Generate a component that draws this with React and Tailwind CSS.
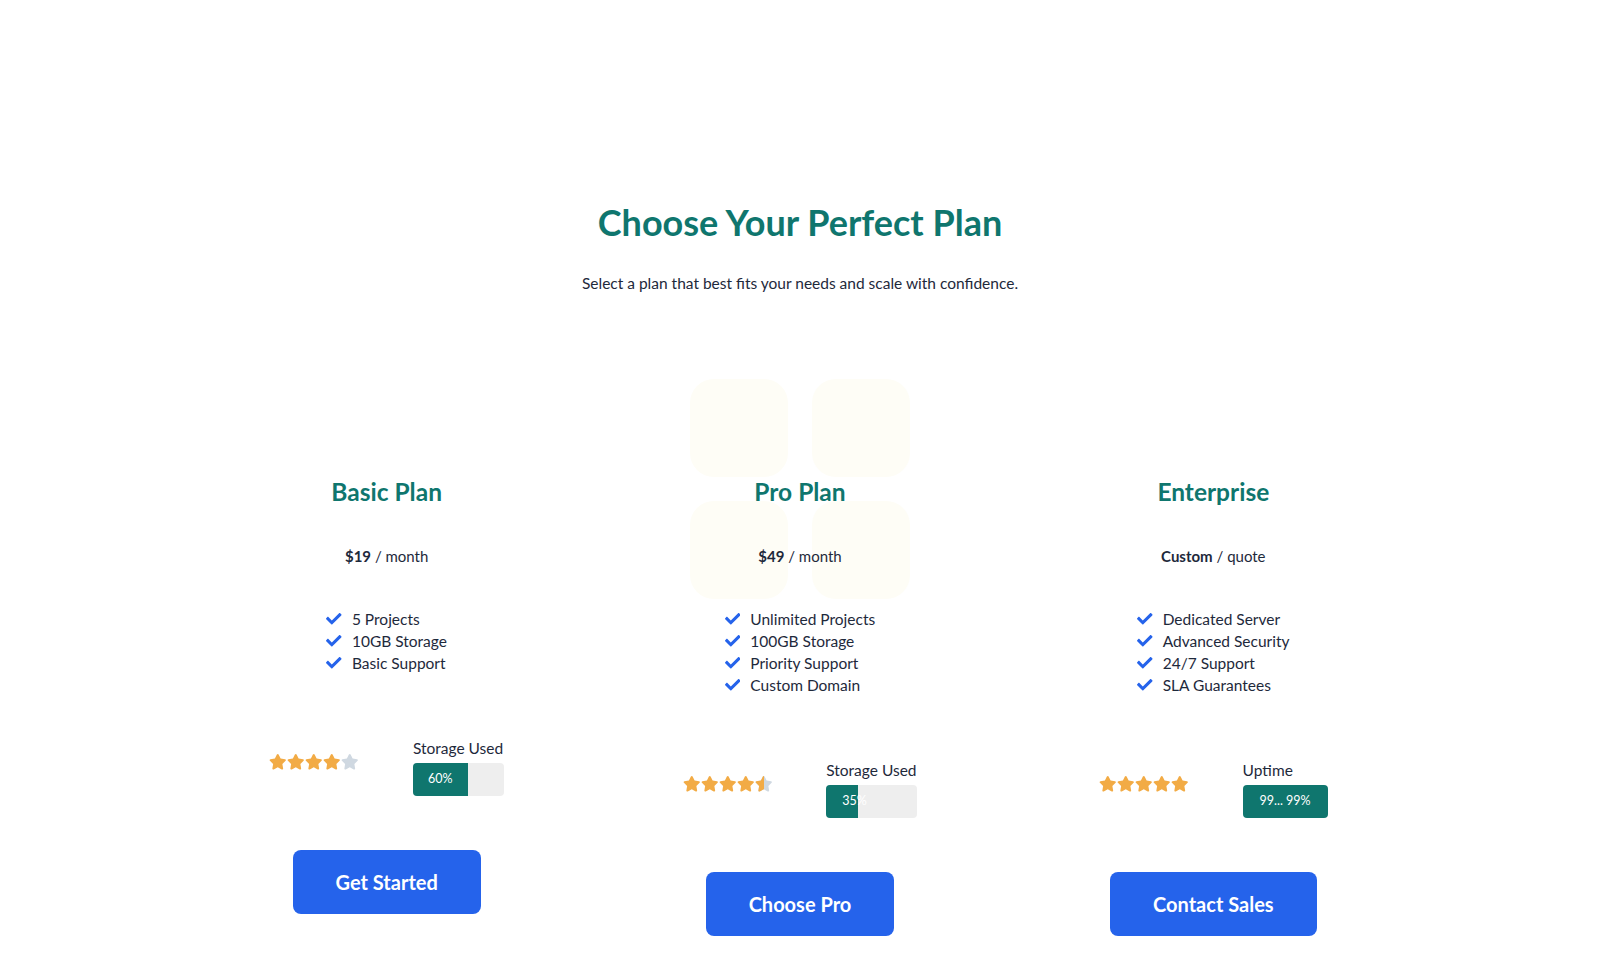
import React from 'react';
import { FaCheck, FaStar } from 'react-icons/fa';

const plans = [
  {
    name: 'Basic Plan',
    price: '$19',
    unit: 'month',
    features: ['5 Projects', '10GB Storage', 'Basic Support'],
    rating: 4,
    stat: { label: 'Storage Used', value: 60, text: '60%', width: 'w-[91px]' },
    cta: 'Get Started',
  },
  {
    name: 'Pro Plan',
    price: '$49',
    unit: 'month',
    features: ['Unlimited Projects', '100GB Storage', 'Priority Support', 'Custom Domain'],
    rating: 4.5,
    stat: { label: 'Storage Used', value: 35, text: '35%', width: 'w-[91px]' },
    cta: 'Choose Pro',
    pattern: true,
  },
  {
    name: 'Enterprise',
    price: 'Custom',
    unit: 'quote',
    features: ['Dedicated Server', 'Advanced Security', '24/7 Support', 'SLA Guarantees'],
    rating: 5,
    stat: { label: 'Uptime', value: 100, text: '99... 99%', width: 'w-[85px]' },
    cta: 'Contact Sales',
  },
];

const Stars = ({ rating }) => (
  <div className="flex items-center gap-[0.5px]">
    {[1, 2, 3, 4, 5].map((i) => {
      if (rating >= i) return <FaStar key={i} size={17.5} className="text-[#f2ab45]" />;
      if (rating > i - 1)
        return (
          <span key={i} className="relative inline-block w-[17.5px] h-[17.5px]">
            <FaStar size={17.5} className="text-[#cfd8e1]" />
            <span className="absolute left-0 top-0 h-[17.5px] w-[9.5px] overflow-hidden">
              <FaStar size={17.5} className="text-[#f2ab45]" />
            </span>
          </span>
        );
      return <FaStar key={i} size={17.5} className="text-[#cfd8e1]" />;
    })}
  </div>
);

// faint tile pattern behind the featured plan
const Pattern = () => (
  <div className="absolute -top-[97px] left-1/2 -translate-x-1/2 w-[220px] grid grid-cols-[98px_98px] gap-[24px] z-0">
    <div className="w-[98px] h-[98px] rounded-3xl bg-[#fefdf6]" />
    <div className="w-[98px] h-[98px] rounded-3xl bg-[#fefdf6]" />
    <div className="w-[98px] h-[98px] rounded-3xl bg-[#fefdf6]" />
    <div className="w-[98px] h-[98px] rounded-3xl bg-[#fefdf6]" />
  </div>
);

const PlanCard = ({ plan }) => (
  <div className="relative flex flex-col items-center">
    {plan.pattern && <Pattern />}
    <div className="relative z-10 flex flex-col items-center">
      <h2 className="text-[24.5px] leading-8 font-bold text-[#0f766e]">{plan.name}</h2>
      <p className="mt-[36px] text-[15px] leading-6 text-[#1e293b]">
        <span className="font-bold">{plan.price}</span> / {plan.unit}
      </p>
      <ul className="mt-[40px] flex flex-col">
        {plan.features.map((f) => (
          <li key={f} className="flex items-center gap-[10px] text-[15.5px] leading-[22px] text-[#1e293b]">
            <FaCheck size={15.5} className="text-[#2563eb]" />
            {f}
          </li>
        ))}
      </ul>
      <div className="mt-[63px] flex items-center gap-[54px]">
        <div className="-mt-[9px]">
          <Stars rating={plan.rating} />
        </div>
        <div className="flex flex-col">
          <span className="text-[15.5px] leading-[22px] text-[#1e293b]">{plan.stat.label}</span>
          <div className={`mt-1 h-[33px] ${plan.stat.width} bg-[#eeeeee] rounded-sm overflow-hidden relative`}>
            <div className="h-full bg-[#0f766e]" style={{ width: `${plan.stat.value}%` }} />
            <span
              className="absolute inset-y-0 left-0 flex items-center text-[12.5px] text-white whitespace-nowrap"
              style={
                plan.stat.value === 100
                  ? { right: 0, justifyContent: 'center' }
                  : plan.stat.value > 50
                  ? { width: `${plan.stat.value}%`, justifyContent: 'center' }
                  : { paddingLeft: 16 }
              }
            >
              {plan.stat.text}
            </span>
          </div>
        </div>
      </div>
      <button className="mt-[54px] h-[64px] px-[43px] rounded-lg bg-[#2563eb] text-white text-[20px] font-bold">
        {plan.cta}
      </button>
    </div>
  </div>
);

const App = () => {
  return (
    <div className="w-full min-h-screen bg-white pb-16" style={{ fontFamily: 'Lato, "Noto Sans", sans-serif' }}>
      <div className="max-w-7xl mx-auto px-5 pt-[202px]">
        <div className="flex flex-col items-center">
          <h1 className="text-[36px] leading-10 font-bold text-[#0f766e]">Choose Your Perfect Plan</h1>
          <p className="mt-[30px] text-[15.5px] leading-[22px] text-[#1e293b]">
            Select a plan that best fits your needs and scale with confidence.
          </p>
        </div>
        <div className="mt-[182px] grid grid-cols-3">
          {plans.map((p) => (
            <PlanCard key={p.name} plan={p} />
          ))}
        </div>
      </div>
    </div>
  );
};

export default App;
